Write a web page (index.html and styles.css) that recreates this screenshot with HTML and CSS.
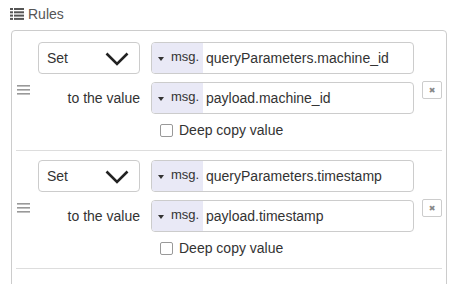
FILE: index.html
```html
<!DOCTYPE html>
<html lang="en">

  <head>
    <meta charset="UTF-8">
    <title>Rules</title>
    <link rel="stylesheet" href="styles.css">
  </head>

  <body>

    <div class="rules__title">
      <svg class="rules__icon" width="14" height="12" viewBox="0 0 14 12">
        <rect x="0" y="0" width="3" height="2" />
        <rect x="4" y="0" width="10" height="2" />
        <rect x="0" y="3.3" width="3" height="2" />
        <rect x="4" y="3.3" width="10" height="2" />
        <rect x="0" y="6.6" width="3" height="2" />
        <rect x="4" y="6.6" width="10" height="2" />
        <rect x="0" y="9.9" width="3" height="2" />
        <rect x="4" y="9.9" width="10" height="2" />
      </svg>
      <span>Rules</span>
    </div>

    <div class="rules__box">
      <ul class="rules__list">

        <li class="rule">
          <div class="rule__handle">
            <svg width="13" height="10" viewBox="0 0 13 10">
              <rect x="0" y="0" width="13" height="1.6" />
              <rect x="0" y="4" width="13" height="1.6" />
              <rect x="0" y="8" width="13" height="1.6" />
            </svg>
          </div>
          <div class="rule__body">
            <div class="rule__line">
              <div class="select">
                <span>Set</span>
                <svg class="select__chevron" width="24" height="14" viewBox="0 0 24 14">
                  <polyline points="1.5,1.5 12,12 22.5,1.5" />
                </svg>
              </div>
              <div class="typed">
                <div class="typed__type"><span class="caret"></span><span class="typed__label">msg.</span></div>
                <div class="typed__value">queryParameters.machine_id</div>
              </div>
            </div>
            <div class="rule__line">
              <div class="rule__label">to the value</div>
              <div class="typed">
                <div class="typed__type"><span class="caret"></span><span class="typed__label">msg.</span></div>
                <div class="typed__value">payload.machine_id</div>
              </div>
            </div>
            <label class="rule__check">
              <input type="checkbox">
              <span>Deep copy value</span>
            </label>
          </div>
          <button class="rule__remove">&#x2716;</button>
        </li>

        <li class="rule">
          <div class="rule__handle">
            <svg width="13" height="10" viewBox="0 0 13 10">
              <rect x="0" y="0" width="13" height="1.6" />
              <rect x="0" y="4" width="13" height="1.6" />
              <rect x="0" y="8" width="13" height="1.6" />
            </svg>
          </div>
          <div class="rule__body">
            <div class="rule__line">
              <div class="select">
                <span>Set</span>
                <svg class="select__chevron" width="24" height="14" viewBox="0 0 24 14">
                  <polyline points="1.5,1.5 12,12 22.5,1.5" />
                </svg>
              </div>
              <div class="typed">
                <div class="typed__type"><span class="caret"></span><span class="typed__label">msg.</span></div>
                <div class="typed__value">queryParameters.timestamp</div>
              </div>
            </div>
            <div class="rule__line">
              <div class="rule__label">to the value</div>
              <div class="typed">
                <div class="typed__type"><span class="caret"></span><span class="typed__label">msg.</span></div>
                <div class="typed__value">payload.timestamp</div>
              </div>
            </div>
            <label class="rule__check">
              <input type="checkbox">
              <span>Deep copy value</span>
            </label>
          </div>
          <button class="rule__remove">&#x2716;</button>
        </li>

      </ul>
    </div>

  </body>

</html>
```

FILE: styles.css
```css
* {
  margin: 0;
  padding: 0;
  box-sizing: border-box;
}

body {
  background-color: #ffffff;
  font-family: "Liberation Sans", Arial, sans-serif;
  font-size: 14px;
  color: #555;
  overflow: hidden;
}

.rules__title {
  display: flex;
  align-items: center;
  gap: 4px;
  height: 16px;
  margin: 6px 0 0 10px;
  color: #555;
}

.rules__icon {
  fill: #555;
}

.rules__box {
  margin: 8px 0 0 11px;
  width: 436px;
  height: 300px;
  border: 1px solid #ccc;
  border-radius: 4px;
}

.rules__list {
  list-style: none;
  padding: 2px 4px 0 4px;
}

.rule {
  display: flex;
  align-items: center;
  padding: 9px 0 12px 0;
  border-bottom: 1px solid #ddd;
}

.rule__handle {
  width: 22px;
  padding-left: 1px;
  display: flex;
  align-items: center;
}

.rule__handle svg {
  fill: #999;
}

.rule__body {
  width: 376px;
}

.rule__line {
  display: flex;
  align-items: center;
  gap: 11px;
  height: 32px;
  margin-bottom: 8px;
}

.select {
  display: flex;
  align-items: center;
  justify-content: space-between;
  width: 102px;
  height: 32px;
  padding: 0 10px 0 8px;
  border: 1px solid #ccc;
  border-radius: 4px;
  color: #333;
}

.select__chevron {
  fill: none;
  stroke: #222;
  stroke-width: 2.6;
  margin-top: 1px;
}

.rule__label {
  width: 102px;
  text-align: right;
  color: #333;
}

.typed {
  display: flex;
  width: 263px;
  height: 32px;
  border: 1px solid #ccc;
  border-radius: 4px;
  overflow: hidden;
}

.typed__type {
  display: flex;
  align-items: center;
  width: 51px;
  padding-left: 6px;
  background-color: #e9e9f6;
  color: #333;
}

.caret {
  width: 0;
  height: 0;
  border-left: 3.5px solid transparent;
  border-right: 3.5px solid transparent;
  border-top: 4px solid #333;
  margin-top: 1px;
}

.typed__label {
  font-size: 13px;
  margin: 0 0 4px 7px;
}

.typed__value {
  display: flex;
  align-items: center;
  padding-left: 3px;
  color: #333;
}

.rule__check {
  display: flex;
  align-items: center;
  gap: 6px;
  height: 16px;
  padding-left: 122px;
  color: #333;
}

.rule__check input {
  appearance: none;
  width: 13px;
  height: 13px;
  border: 1px solid #999;
  border-radius: 2px;
  background: #fff;
}

.rule__remove {
  display: flex;
  align-items: center;
  justify-content: center;
  width: 20px;
  height: 18px;
  margin-left: 8px;
  border: 1px solid #ccc;
  border-radius: 2px;
  background: #fff;
  color: #888;
  font-size: 8px;
  font-family: "DejaVu Sans", sans-serif;
}
```
